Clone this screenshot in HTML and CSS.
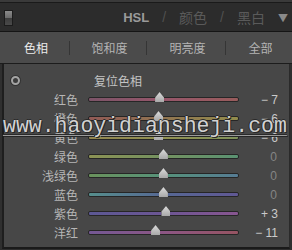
FILE: index.html
```html
<!DOCTYPE html>
<html lang="zh-CN">
<head>
    <meta charset="UTF-8">
    <meta name="viewport" content="width=device-width, initial-scale=1.0">
    <title>HSL</title>
    <link rel="stylesheet" href="styles.css">
</head>
<body>
    <div class="app">
        <div class="topline"></div>
        <header class="head">
            <span class="switch"></span>
            <div class="modes">
                <span class="mode active">HSL</span>
                <span class="slash">/</span>
                <span class="mode">颜色</span>
                <span class="slash">/</span>
                <span class="mode">黑白</span>
                <span class="arrow">▼</span>
            </div>
        </header>
        <nav class="tabs">
            <div class="tab selected">色相</div>
            <div class="tab">饱和度</div>
            <div class="tab">明亮度</div>
            <div class="tab">全部</div>
        </nav>
        <section class="panel">
            <div class="row reset">
                <span class="target"></span>
                <span class="reset-text">复位色相</span>
            </div>
            <div class="row">
                <span class="label">红色</span>
                <div class="track red"><span class="thumb" style="left: 47.7%"></span></div>
                <span class="value">− 7</span>
            </div>
            <div class="row">
                <span class="label">橙色</span>
                <div class="track orange"><span class="thumb" style="left: 47%"></span></div>
                <span class="value">− 6</span>
            </div>
            <div class="row">
                <span class="label">黄色</span>
                <div class="track yellow"><span class="thumb" style="left: 47%"></span></div>
                <span class="value">− 6</span>
            </div>
            <div class="row">
                <span class="label">绿色</span>
                <div class="track green"><span class="thumb" style="left: 50.3%"></span></div>
                <span class="value zero">0</span>
            </div>
            <div class="row">
                <span class="label">浅绿色</span>
                <div class="track aqua"><span class="thumb" style="left: 50.3%"></span></div>
                <span class="value zero">0</span>
            </div>
            <div class="row">
                <span class="label">蓝色</span>
                <div class="track blue"><span class="thumb" style="left: 50.3%"></span></div>
                <span class="value zero">0</span>
            </div>
            <div class="row">
                <span class="label">紫色</span>
                <div class="track purple"><span class="thumb" style="left: 52%"></span></div>
                <span class="value">+ 3</span>
            </div>
            <div class="row">
                <span class="label">洋红</span>
                <div class="track magenta"><span class="thumb" style="left: 45%"></span></div>
                <span class="value">− 11</span>
            </div>
            <!-- watermark over the rows -->
            <div class="watermark">www.haoyidiansheji.com</div>
        </section>
    </div>
</body>
</html>
```

FILE: styles.css
```css
body {
    margin: 0;
    padding: 0;
    background-color: #2f2f2f;
    font-family: "Liberation Sans", "Noto Sans CJK SC", sans-serif;
}
.app {
    width: 292px;
    height: 250px;
    overflow: hidden;
    background-color: #2f2f2f;
}
.topline {
    height: 2px;
    background-color: #3a3a3a;
    border-bottom: 1px solid #1a1a1a;
}

/* header */
.head {
    height: 28px;
    background-color: #2c2c2c;
    border-bottom: 1px solid #151515;
    display: flex;
    align-items: center;
    justify-content: space-between;
    padding: 0 4px 0 4px;
}
.switch {
    width: 7px;
    height: 14px;
    margin-top: 2px;
    border: 1px solid #1c1c1c;
    background: linear-gradient(#8a8a8a 0, #6a6a6a 50%, #3c3c3c 50%, #4a4a4a 100%);
}
.modes {
    display: flex;
    align-items: center;
    font-family: "Noto Sans CJK SC", sans-serif;
    font-size: 14px;
    color: #5a5a5a;
}
.mode.active {
    font-family: "Liberation Sans", sans-serif;
    font-weight: bold;
    font-size: 13px;
    color: #9a9a9a;
}
.slash {
    margin: 0 13px;
    color: #505050;
    font-family: "Liberation Sans", sans-serif;
}
.arrow {
    margin-left: 13px;
    font-size: 10px;
    color: #8a8a8a;
}

/* tabs */
.tabs {
    height: 31px;
    background-color: #4b4b4b;
    border-bottom: 1px solid #1c1c1c;
    display: grid;
    grid-template-columns: 70px 77px 79px 1fr;
    align-items: center;
    font-family: "Noto Sans CJK SC", sans-serif;
    font-size: 12px;
    color: #b4b4b4;
}
.tab {
    text-align: center;
    height: 14px;
    line-height: 14px;
    border-right: 1px solid #353535;
    padding-left: 3px;
}
.tab:last-child {
    border-right: none;
}
.tab.selected {
    color: #ececec;
}

/* slider panel */
.panel {
    position: relative;
    height: 177px;
    margin-left: 2px;
    margin-right: 2px;
    padding-top: 6px;
    background-color: #474747;
    border-left: 2px solid #1e1e1e;
    border-right: 1px solid #2a2a2a;
    border-bottom: 2px solid #1a1a1a;
}
.row {
    display: grid;
    grid-template-columns: 74px 161px 39px;
    align-items: center;
    height: 19px;
}
.row .track {
    margin-left: 10px;
}
.reset {
    height: 20px;
    display: flex;
}
.target {
    width: 5px;
    height: 5px;
    margin-left: 7px;
    border: 2px solid #a4a4a4;
    border-radius: 50%;
    background-color: #3c3c3c;
    box-shadow: 0 0 0 1px #333;
}
.reset-text {
    margin-left: 74px;
    font-family: "Noto Sans CJK SC", sans-serif;
    font-size: 12px;
    color: #c4c4c4;
}
.label {
    text-align: right;
    font-family: "Noto Sans CJK SC", sans-serif;
    font-size: 12px;
    color: #b6b6b6;
}
.track {
    position: relative;
    height: 3px;
    border: 1px solid #262626;
    border-radius: 2px;
}
.value {
    text-align: right;
    font-size: 12px;
    color: #cacaca;
    white-space: pre;
}
.value.zero {
    color: #858585;
    padding-right: 1px;
}
.thumb {
    position: absolute;
    top: -6px;
    width: 9px;
    height: 10px;
    margin-left: -5px;
    filter: drop-shadow(0 0 0.6px #1a1a1a);
}
.thumb::before {
    content: "";
    display: block;
    width: 100%;
    height: 100%;
    background: linear-gradient(#dcdcdc, #a8a8a8);
    clip-path: polygon(50% 0, 100% 55%, 100% 100%, 0 100%, 0 55%);
}

/* track colours */
.red { background: linear-gradient(90deg, #7c5468, #96566a 50%, #985c5c); }
.orange { background: linear-gradient(90deg, #925a56, #907450 50%, #928c4c); }
.yellow { background: linear-gradient(90deg, #928650, #929252 50%, #80925a); }
.green { background: linear-gradient(90deg, #8c9254, #749260 50%, #5a9272); }
.aqua { background: linear-gradient(90deg, #6a925c, #56927a 50%, #567c94); }
.blue { background: linear-gradient(90deg, #568e8c, #566894 50%, #605894); }
.purple { background: linear-gradient(90deg, #5c5894, #6c5694 50%, #885690); }
.magenta { background: linear-gradient(90deg, #745894, #8c5684 50%, #965462); }

.watermark {
    position: absolute;
    left: -1px;
    top: 50px;
    font-family: "Liberation Mono", monospace;
    font-size: 21.5px;
    line-height: 24px;
    color: #d2d2d2;
    text-decoration: underline;
    text-decoration-color: #9a9a9a;
    text-decoration-thickness: 1px;
    text-underline-offset: 3px;
    text-shadow: 1px 1px 0 #262626, -1px 0 0 #2a2a2a, 0 -1px 0 #2a2a2a;
    white-space: nowrap;
}
```
